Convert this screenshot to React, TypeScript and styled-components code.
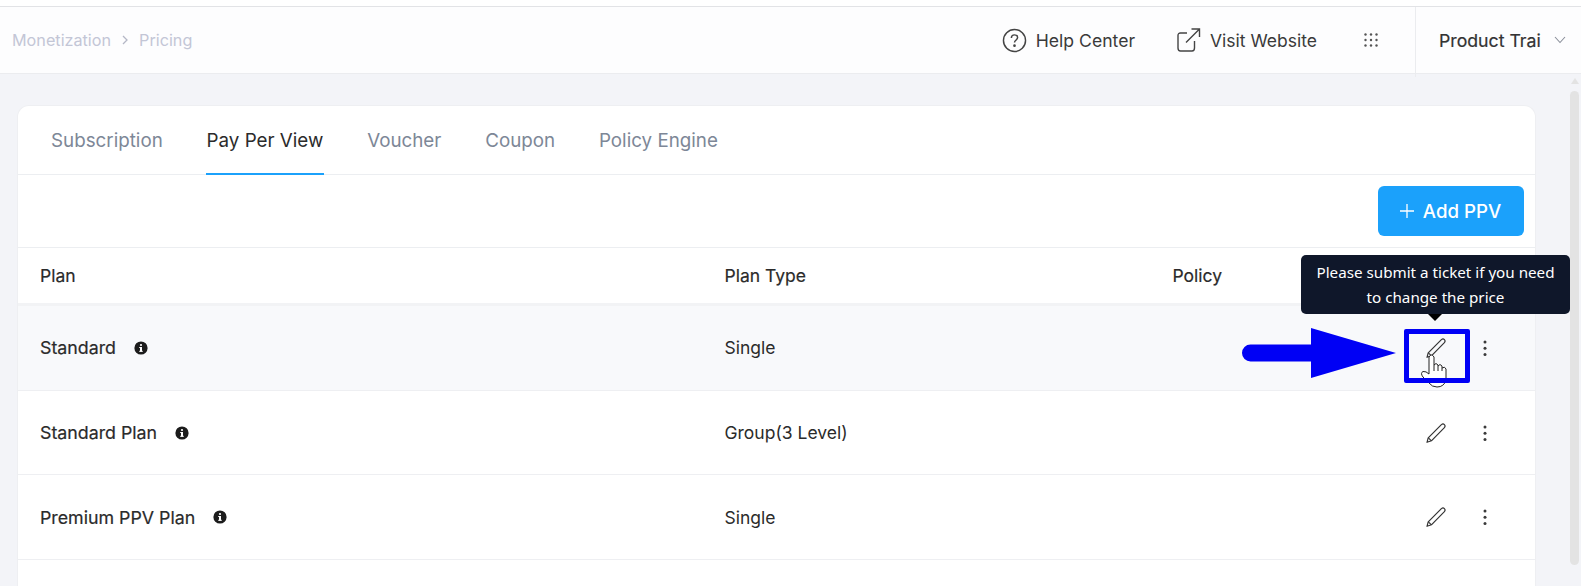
import React from "react";
import styled, { createGlobalStyle } from "styled-components";

const Global = createGlobalStyle`
  html, body { margin: 0; padding: 0; height: 100%; overflow: hidden; background: #f3f4f8; }
  body { font-family: Inter, "Liberation Sans", sans-serif; color: #262626; }
  * { box-sizing: border-box; }
`;

const Page = styled.div`
  position: relative;
  display: flex;
  flex-direction: column;
  width: 1581px;
  height: 586px;
  overflow: hidden;
  background: #f3f4f8;
`;

const TopStrip = styled.div`
  height: 7px;
  background: #fff;
  border-bottom: 1px solid #e2e3e6;
`;

const Header = styled.header`
  display: flex;
  align-items: center;
  height: 67px;
  background: #fdfdfe;
  border-bottom: 1px solid #ebecef;
  padding-left: 12px;
`;

const Crumbs = styled.nav`
  display: flex;
  align-items: center;
  gap: 9px;
  flex: 1;
  font-size: 16.2px;
  color: #c3c6d6;
`;

const HeaderLink = styled.a`
  display: flex;
  align-items: center;
  gap: 9px;
  font-size: 17.5px;
  color: #3a3a3a;
`;

const HelpLink = styled(HeaderLink)`
  margin-right: 42px;
  font-size: 17.6px;
`;

const VisitLink = styled(HeaderLink)`
  margin-right: 47px;
`;

const Dots = styled.svg`
  margin-right: 37px;
`;

const Account = styled.div`
  display: flex;
  align-items: center;
  align-self: stretch;
  width: 166px;
  margin-bottom: -4px;
  padding: 0 0 4px 23px;
  gap: 13px;
  border-left: 1px solid #ebecef;
  font-size: 17.7px;
  color: #333;
  white-space: nowrap;
  -webkit-text-stroke: 0.2px #333;
`;

const Card = styled.main`
  flex: 1;
  width: 1519px;
  margin: 31px 0 0 17px;
  background: #fff;
  border: 1px solid #eeeff2;
  border-bottom: 0;
  border-radius: 12px 12px 0 0;
`;

const Tabs = styled.div`
  display: flex;
  gap: 41.8px;
  height: 69px;
  padding-left: 32px;
  border-bottom: 1px solid #eceef1;
`;

const Tab = styled.div<{ $active?: boolean }>`
  display: flex;
  align-items: center;
  height: 69px;
  padding: 2px 1px 0;
  font-size: 18.8px;
  color: ${(p) => (p.$active ? "#2b2b2b" : "#7d8797")};
  border-bottom: 2px solid ${(p) => (p.$active ? "#1ba1fb" : "transparent")};
`;

const Toolbar = styled.div`
  display: flex;
  justify-content: flex-end;
  align-items: center;
  height: 73px;
  padding-right: 11px;
  border-bottom: 1px solid #eceef1;
`;

const AddButton = styled.button`
  display: flex;
  align-items: center;
  justify-content: center;
  gap: 8px;
  width: 146px;
  height: 50px;
  padding: 0 2px 0 0;
  border: 0;
  border-radius: 6px;
  background: #1ba1fb;
  color: #fff;
  font: 500 18.7px Inter, sans-serif;
`;

const Row = styled.div<{ $hover?: boolean; $head?: boolean }>`
  display: grid;
  grid-template-columns: 684.5px 448px 1fr 130px;
  align-items: center;
  padding-left: 22px;
  height: ${(p) => (p.$head ? "58px" : "84.7px")};
  background: ${(p) => (p.$hover ? "#f8f9fb" : "#fff")};
  border-bottom: ${(p) => (p.$head ? "3px solid #f2f3f5" : "1px solid #eeeff2")};
  font-size: 17.5px;
  color: #2b2b2b;
  -webkit-text-stroke: ${(p) => (p.$head ? "0.2px #2b2b2b" : "0")};
`;

const PlanName = styled.div`
  display: flex;
  align-items: center;
  gap: 18px;
  font-size: 17.8px;
  -webkit-text-stroke: 0.2px #2b2b2b;
`;

const Actions = styled.div`
  display: flex;
  align-items: center;
  gap: 36px;
  padding-left: 21px;
`;

const Tooltip = styled.div`
  position: absolute;
  left: 1301px;
  top: 255px;
  width: 269px;
  height: 59px;
  padding-top: 5px;
  border-radius: 5px;
  background: #0f172a;
  color: #fff;
  text-align: center;
  font: 15.2px/25px "Noto Sans", "Open Sans", sans-serif;

  &::after {
    content: "";
    position: absolute;
    left: 127px;
    bottom: -7px;
    border: 7px solid transparent;
    border-bottom: 0;
    border-top-color: #000;
  }
`;

const Annotation = styled.svg`
  position: absolute;
  left: 1240px;
  top: 325px;
`;

const HighlightBox = styled.div`
  position: absolute;
  left: 1404px;
  top: 329px;
  width: 66px;
  height: 54px;
  border: 5px solid #0000f5;
  border-radius: 2px;
`;

const Cursor = styled.svg`
  position: absolute;
  left: 1420px;
  top: 353px;
`;

const ScrollThumb = styled.div`
  position: absolute;
  left: 1570px;
  top: 91px;
  width: 9px;
  height: 474px;
  border-radius: 5px;
  background: #e3e3e3;
`;

const ScrollArrow = styled.div`
  position: absolute;
  left: 1571px;
  top: 78px;
  border: 4px solid transparent;
  border-top: 0;
  border-bottom: 6px solid #e3e3e3;
`;

const Info = () => (
  <svg width="14" height="14" viewBox="0 0 14 14">
    <circle cx="7" cy="7" r="6.6" fill="#1c1c1c" />
    <rect x="6" y="6" width="2" height="4.6" fill="#fff" />
    <rect x="5.2" y="6" width="2" height="1" fill="#fff" />
    <rect x="5.2" y="9.8" width="3.6" height="1" fill="#fff" />
    <circle cx="7" cy="4" r="1.1" fill="#fff" />
  </svg>
);

const Pencil = () => (
  <svg width="20" height="20" viewBox="0 0 20 20" fill="none" stroke="#333" strokeWidth="1.2" strokeLinejoin="round">
    <path d="M1 19.3 L2.2 14.8 L15.4 1.6 C16.4 .8 17.6 .8 18.4 1.6 C19.2 2.4 19.2 3.6 18.4 4.6 L5.4 17.8 Z" />
    <path d="M2.4 14.8 L5.4 17.8" />
  </svg>
);

const Kebab = () => (
  <svg width="6" height="16" viewBox="0 0 6 16" fill="#3a3a3a">
    <circle cx="3" cy="2" r="1.5" />
    <circle cx="3" cy="8.2" r="1.5" />
    <circle cx="3" cy="14.4" r="1.5" />
  </svg>
);

const plans = [
  { name: "Standard", type: "Single", hover: true },
  { name: "Standard Plan", type: "Group(3 Level)" },
  { name: "Premium PPV Plan", type: "Single" },
];

export default function App() {
  return (
    <Page>
      <Global />
      <TopStrip />
      <Header>
        <Crumbs>
          <span>Monetization</span>
          <svg width="10" height="10" viewBox="0 0 10 10" fill="none" stroke="#b4b7c6" strokeWidth="1.3">
            <path d="M3 1 L7 5 L3 9" />
          </svg>
          <span>Pricing</span>
        </Crumbs>
        <HelpLink>
          <svg width="25" height="25" viewBox="0 0 24 24" fill="none" stroke="#444" strokeWidth="1.4">
            <circle cx="12" cy="12" r="10.6" />
            <path d="M9 9.6 C9 7.6 10.4 6.6 12 6.6 C13.8 6.6 15 7.8 15 9.2 C15 11.4 12 11.6 12 14" />
            <circle cx="12" cy="17" r=".6" fill="#444" />
          </svg>
          Help Center
        </HelpLink>
        <VisitLink>
          <svg width="24" height="24" viewBox="0 0 24 24" fill="none" stroke="#444" strokeWidth="1.4">
            <path d="M10 5 H3.5 Q1 5 1 7.5 V20 Q1 23 3.5 23 H15 Q17.5 23 17.5 20 V13" />
            <path d="M9 14.5 L22 1.5 M14.5 1 H22.5 V9" />
          </svg>
          Visit Website
        </VisitLink>
        <Dots width="14" height="14" viewBox="0 0 14 14" fill="#555">
          {[1.5, 7, 12.5].flatMap((y) =>
            [1.5, 7, 12.5].map((x) => <circle key={`${x}-${y}`} cx={x} cy={y} r="1.2" />)
          )}
        </Dots>
        <Account>
          Product Trai
          <svg width="12" height="8" viewBox="0 0 12 8" fill="none" stroke="#8a8f9a" strokeWidth="1.1">
            <path d="M1 1 L6 6.5 L11 1" />
          </svg>
        </Account>
      </Header>
      <Card>
        <Tabs>
          <Tab>Subscription</Tab>
          <Tab $active>Pay Per View</Tab>
          <Tab>Voucher</Tab>
          <Tab>Coupon</Tab>
          <Tab>Policy Engine</Tab>
        </Tabs>
        <Toolbar>
          <AddButton>
            <svg width="16" height="16" viewBox="0 0 16 16" stroke="#fff" strokeWidth="1.3">
              <path d="M8 1 V15 M1 8 H15" />
            </svg>
            Add PPV
          </AddButton>
        </Toolbar>
        <Row $head>
          <div>Plan</div>
          <div>Plan Type</div>
          <div>Policy</div>
          <div />
        </Row>
        {plans.map((p) => (
          <Row key={p.name} $hover={p.hover}>
            <PlanName>
              {p.name}
              <Info />
            </PlanName>
            <div>{p.type}</div>
            <div />
            <Actions>
              <Pencil />
              <Kebab />
            </Actions>
          </Row>
        ))}
      </Card>
      <Tooltip>
        Please submit a ticket if you need
        <br />
        to change the price
      </Tooltip>
      <Annotation width="160" height="56" viewBox="0 0 160 56">
        <path d="M10.5 19.5 H71 V3 L156 28 L71 53 V36.5 H10.5 A8.5 8.5 0 0 1 10.5 19.5 Z" fill="#0000f5" />
      </Annotation>
      <Cursor width="28" height="36" viewBox="0 0 28 36" fill="#fff" stroke="#222" strokeWidth="1">
        <path d="M9 4 Q11.5 0 14 4 V12 Q16 9 18 12 V13 Q20 10 22 13 V15 Q25 13 26 16 V27 Q24 34 17 34 Q12 34 9 30 L3 24 Q0 20 3 18.5 Q6 18 9 21 Z" />
        <path d="M14 12 V18 M18 13 V18 M22 15 V18" fill="none" />
      </Cursor>
      <HighlightBox />
      <ScrollArrow />
      <ScrollThumb />
    </Page>
  );
}
